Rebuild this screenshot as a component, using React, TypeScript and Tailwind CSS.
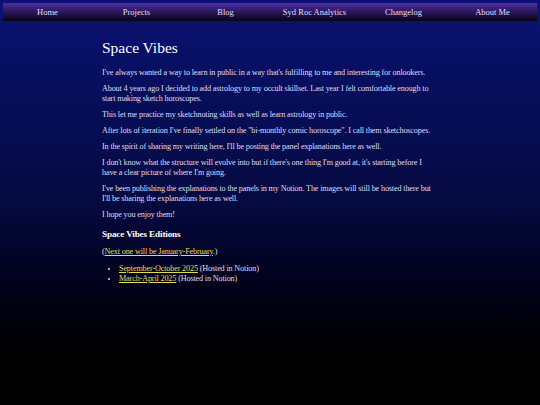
const navItems = ['Home', 'Projects', 'Blog', 'Syd Roc Analytics', 'Changelog', 'About Me'];

const paragraphs = [
  "I've always wanted a way to learn in public in a way that's fulfilling to me and interesting for onlookers.",
  'About 4 years ago I decided to add astrology to my occult skillset. Last year I felt comfortable enough to start making sketch horoscopes.',
  'This let me practice my sketchnoting skills as well as learn astrology in public.',
  'After lots of iteration I\'ve finally settled on the "bi-monthly comic horoscope". I call them sketchoscopes.',
  "In the spirit of sharing my writing here, I'll be posting the panel explanations here as well.",
  "I don't know what the structure will evolve into but if there's one thing I'm good at, it's starting before I have a clear picture of where I'm going.",
  "I've been publishing the explanations to the panels in my Notion. The images will still be hosted there but I'll be sharing the explanations here as well.",
  'I hope you enjoy them!',
];

const editions = ['September-October 2025', 'March-April 2025'];

export default function App() {
  return (
    <div
      className="min-h-screen bg-gradient-to-b from-[#0a1275] via-[#050a40] to-black text-[#dedcf4] pt-[3px] px-[3px]"
      style={{ fontFamily: '"Liberation Serif", "DejaVu Serif", serif' }}
    >
      <nav className="grid grid-cols-6 h-[18px] bg-gradient-to-b from-[#4f2ea6] to-[#0a0418] text-[8.5px] text-[#e2defa]">
        {navItems.map((item) => (
          <a key={item} className="flex items-center justify-center">
            {item}
          </a>
        ))}
      </nav>

      <main className="w-[336px] mx-auto pt-[17px] pb-10 text-[8.2px] leading-[10px] tracking-[-0.16px]">
        <h1 className="text-[15.5px] leading-[20px] text-white mb-[10px] tracking-normal">Space Vibes</h1>

        {paragraphs.map((p) => (
          <p key={p} className="mb-[6px]">
            {p}
          </p>
        ))}

        <h2 className="text-[9.2px] font-bold text-white mt-[9px] mb-[8px]">Space Vibes Editions</h2>

        <p className="mb-[7px]">
          (<a className="text-[#e0dc5a] underline">Next one will be January-February</a>.)
        </p>

        <ul className="list-disc pl-[17px]">
          {editions.map((e) => (
            <li key={e} className="leading-[9.5px]">
              <a className="text-[#e0dc5a] underline">{e}</a> (Hosted in Notion)
            </li>
          ))}
        </ul>
      </main>
    </div>
  );
}
